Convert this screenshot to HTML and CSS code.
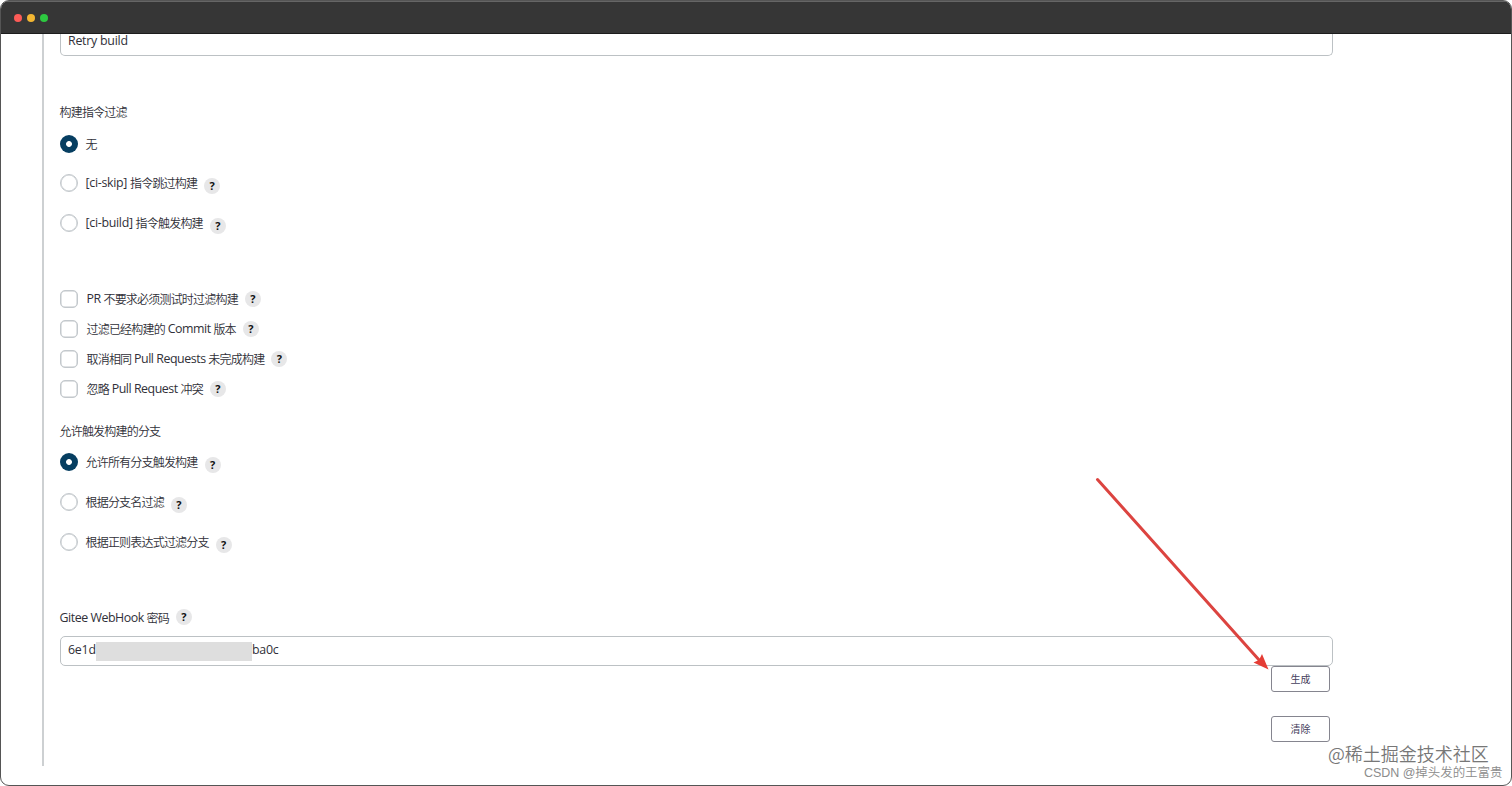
FILE: index.html
```
<!DOCTYPE html>
<html lang="zh-CN">
<head>
<meta charset="utf-8">
<title>Jenkins</title>
<link rel="stylesheet" href="styles.css">
</head>
<body>
<div class="window">
  <header class="titlebar"><i class="dot red"></i><i class="dot yellow"></i><i class="dot green"></i></header>
  <main class="content">
    <div class="panel">
      <div class="input input-top"><span class="en retry">Retry build</span></div>

      <div class="label label-first"><span class="zh">构建指令过滤</span></div>
      <div class="radios">
        <div class="row"><i class="radio on"></i><span class="zh">无</span></div>
        <div class="row"><i class="radio"></i><span class="en">[ci-skip]&nbsp;</span><span class="zh">指令跳过构建</span><b class="help">?</b></div>
        <div class="row"><i class="radio"></i><span class="en">[ci-build]&nbsp;</span><span class="zh">指令触发构建</span><b class="help">?</b></div>
      </div>

      <div class="checks">
        <div class="row"><i class="check"></i><span class="en">PR&nbsp;</span><span class="zh">不要求必须测试时过滤构建</span><b class="help">?</b></div>
        <div class="row"><i class="check"></i><span class="zh">过滤已经构建的</span><span class="en">&nbsp;Commit&nbsp;</span><span class="zh">版本</span><b class="help">?</b></div>
        <div class="row"><i class="check"></i><span class="zh">取消相同</span><span class="en">&nbsp;Pull Requests&nbsp;</span><span class="zh">未完成构建</span><b class="help">?</b></div>
        <div class="row"><i class="check"></i><span class="zh">忽略</span><span class="en">&nbsp;Pull Request&nbsp;</span><span class="zh">冲突</span><b class="help">?</b></div>
      </div>

      <div class="label label-branch"><span class="zh">允许触发构建的分支</span></div>
      <div class="radios">
        <div class="row"><i class="radio on"></i><span class="zh">允许所有分支触发构建</span><b class="help">?</b></div>
        <div class="row"><i class="radio"></i><span class="zh">根据分支名过滤</span><b class="help">?</b></div>
        <div class="row"><i class="radio"></i><span class="zh">根据正则表达式过滤分支</span><b class="help">?</b></div>
      </div>

      <div class="label label-secret"><span class="en">Gitee WebHook&nbsp;</span><span class="zh">密码</span><b class="help">?</b></div>
      <div class="input input-secret"><span class="en secret-start">6e1d</span><i class="mask"></i><span class="en">ba0c</span></div>
      <div class="actions">
        <button class="btn">生成</button>
        <button class="btn">清除</button>
      </div>
    </div>
  </main>
  <svg class="arrow" width="190" height="210" viewBox="1090 470 190 210">
    <path d="M1097.500 479.500L1260 661" fill="none" stroke="#dc4440" stroke-width="3" stroke-linecap="round"/>
    <path d="M1268.500 669.500L1253.500 662.500L1259 660L1262 654Z" fill="#e43d35"/>
  </svg>
  <div class="mark mark-main"><span>@稀土掘金技术社区</span></div>
  <div class="mark mark-sub"><span>CSDN @掉头发的王富贵</span></div>
</div>
</body>
</html>
```
FILE: styles.css
```
* { box-sizing: border-box; }
body { margin: 0; background: #fff; font-family: "Noto Sans", "Noto Sans CJK SC", sans-serif; color: #303038; }
.window { position: relative; display: flex; flex-direction: column; width: 1512px; height: 786px; border: 1px solid #555; border-radius: 9px; overflow: hidden; background: #fff; }
.titlebar { flex: none; display: flex; gap: 5px; align-items: center; height: 33px; padding: 0 0 0 12.5px; background: #363636; border-top: 1px solid #666; border-bottom: 1px solid #1c1c1c; }
.dot { width: 8px; height: 8px; border-radius: 50%; }
.red { background: #fc5b57; }
.yellow { background: #f2b632; }
.green { background: #2dc840; }
.content { padding-left: 41px; height: 732px; }
.panel { height: 732px; width: 1290px; border-left: 2px solid #cdd0d2; padding-left: 16px; }
.input { display: flex; align-items: center; width: 1273px; border: 1px solid #bcc1c4; border-radius: 5px; padding-left: 7px; background: #fff; }
.input-top { height: 21.5px; border-top: 0; border-radius: 0 0 5px 5px; padding-bottom: 6px; }
.en { font-family: "Open Sans", "Noto Sans", sans-serif; font-size: 12.4px; line-height: 20px; white-space: pre; letter-spacing: -.46px; }
.input .en { letter-spacing: -.25px; }
.radios .en { letter-spacing: -.3px; }
.zh { font-family: "Noto Sans CJK SC", sans-serif; font-weight: 350; font-size: 12px; line-height: 20px; letter-spacing: -.8px; white-space: nowrap; }
.label { display: flex; align-items: center; height: 20px; margin-left: -.5px; }
.label-first { margin-top: 46.5px; }
.radios { margin-top: 12.5px; }
.radios .row { height: 39.7px; }
.row { display: flex; align-items: flex-start; }
.radio, .check { flex: none; width: 18px; height: 18px; border: 1.5px solid #c3c8cc; background: #fff; margin-right: 7.5px; }
.radio { border-radius: 50%; box-shadow: inset 0 0 0 .5px #c3c8cc; }
.radio.on { border: 0; box-shadow: none; background: radial-gradient(circle, #fff 2.5px, #063e61 3.3px); }
.check { border-radius: 5px; margin-right: 8.5px; box-shadow: inset 0 0 0 .5px #c3c8cc; }
.row span { margin-top: -1px; }
.help { flex: none; width: 16px; height: 16px; margin-left: 7px; border-radius: 50%; background: #e7e7e8; color: #111; font: 700 11px/16px "Open Sans", sans-serif; text-align: center; }
.radios .help { margin-top: 4px; }
.checks { margin-top: 36px; }
.checks .row { height: 30.3px; }
.checks .help { margin-top: 1px; }
.label-branch { margin-top: 10px; }
.label-secret { margin-top: 35.5px; }
.label-secret .help { margin-top: -1px; }
.input-secret { margin-top: 8px; height: 30px; }
.mask { width: 156px; height: 19px; margin-top: 2px; background: #dedede; }
.secret-start { width: 28px; }
.input-secret .en { margin-top: -1px; }
.actions { display: flex; flex-direction: column; align-items: flex-end; gap: 24px; padding-right: 2px; }
.btn { width: 59px; height: 26px; padding: 0; border: 1px solid #85858f; border-radius: 3px; background: #fff; color: #45405c; font: 400 10px/20px "Noto Sans CJK SC", sans-serif; }
.arrow { position: absolute; left: 1089px; top: 469px; }
.mark { position: absolute; color: #777; font-weight: 350; white-space: nowrap; }
.mark-main { left: 1327px; top: 738.5px; font-family: "Noto Sans CJK SC", sans-serif; font-size: 18px; line-height: 26px; }
.mark-sub { left: 1363px; top: 761px; font-family: "Liberation Sans", "Noto Sans CJK SC", sans-serif; font-size: 12.5px; letter-spacing: -.05px; line-height: 22px; color: #8c8c8c; }
```
